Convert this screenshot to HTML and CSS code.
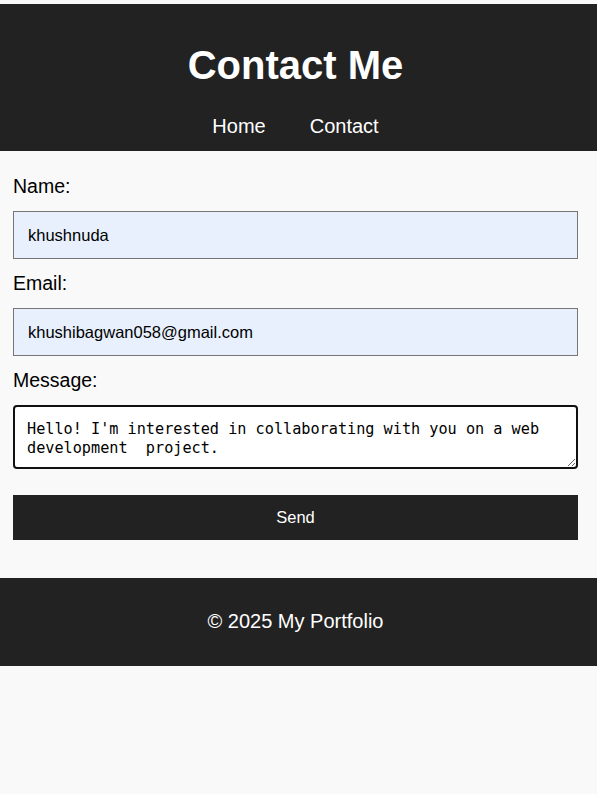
FILE: index.html
```html
<!DOCTYPE html>
<html lang="en">
<head>
<meta charset="utf-8">
<title>Contact Me</title>
<link rel="stylesheet" href="styles.css">
</head>
<body>
<header class="site-header">
  <h1 class="site-title">Contact Me</h1>
  <nav class="site-nav">
    <a class="nav-link" href="#">Home</a>
    <a class="nav-link" href="#">Contact</a>
  </nav>
</header>
<main class="content">
  <form class="contact-form">
    <label class="field-label" for="name">Name:</label>
    <input class="field-input" id="name" type="text" value="khushnuda">
    <label class="field-label" for="email">Email:</label>
    <input class="field-input" id="email" type="email" value="khushibagwan058@gmail.com">
    <label class="field-label" for="message">Message:</label>
    <textarea class="field-textarea" id="message" rows="2">Hello! I'm interested in collaborating with you on a web development  project.</textarea>
    <button class="send-button" type="button">Send</button>
  </form>
</main>
<footer class="site-footer">
  <p class="footer-text">© 2025 My Portfolio</p>
</footer>
</body>
</html>
```

FILE: styles.css
```css
html, body {
  margin: 0;
  padding: 0;
}

body {
  padding-top: 4px;
  background: #f9f9f9;
  font-family: "Liberation Sans", Arial, sans-serif;
  color: #000;
}

.site-header {
  background: #222;
  color: #fff;
  text-align: center;
  padding: 38px 6px 13px 0;
}

.site-title {
  margin: 0 0 27px;
  font-size: 40px;
  line-height: 46px;
  font-weight: bold;
}

.site-nav {
  display: flex;
  justify-content: center;
  gap: 44px;
  line-height: 23px;
}

.nav-link {
  color: #fff;
  text-decoration: none;
  font-size: 20px;
}

.contact-form {
  display: flex;
  flex-direction: column;
  padding: 24px 19px 38px 13px;
}

.field-label {
  font-size: 19.5px;
  line-height: 23px;
  margin-bottom: 13px;
}

.field-input {
  box-sizing: border-box;
  width: 100%;
  height: 48px;
  margin: 0 0 13px;
  padding: 0 14px;
  border: 1px solid #767676;
  border-radius: 0;
  background: #e8f0fe;
  font-family: "Liberation Sans", Arial, sans-serif;
  font-size: 16.5px;
  color: #000;
}

.field-textarea {
  box-sizing: border-box;
  width: 100%;
  height: 64px;
  margin: 0 0 26px;
  padding: 13px 12px 9px;
  border: 2px solid #101010;
  border-radius: 4px;
  background: #fff;
  font-family: "DejaVu Sans Mono", "Liberation Mono", monospace;
  font-size: 15.2px;
  line-height: 19px;
  color: #000;
  outline: none;
}

.send-button {
  width: 100%;
  height: 45px;
  border: none;
  background: #222;
  color: #fff;
  font-family: "Liberation Sans", Arial, sans-serif;
  font-size: 16.5px;
  padding: 0;
}

.site-footer {
  background: #222;
  color: #fff;
  text-align: center;
  padding: 32px 6px 33px 0;
}

.footer-text {
  margin: 0;
  font-size: 20px;
  line-height: 23px;
}
```
